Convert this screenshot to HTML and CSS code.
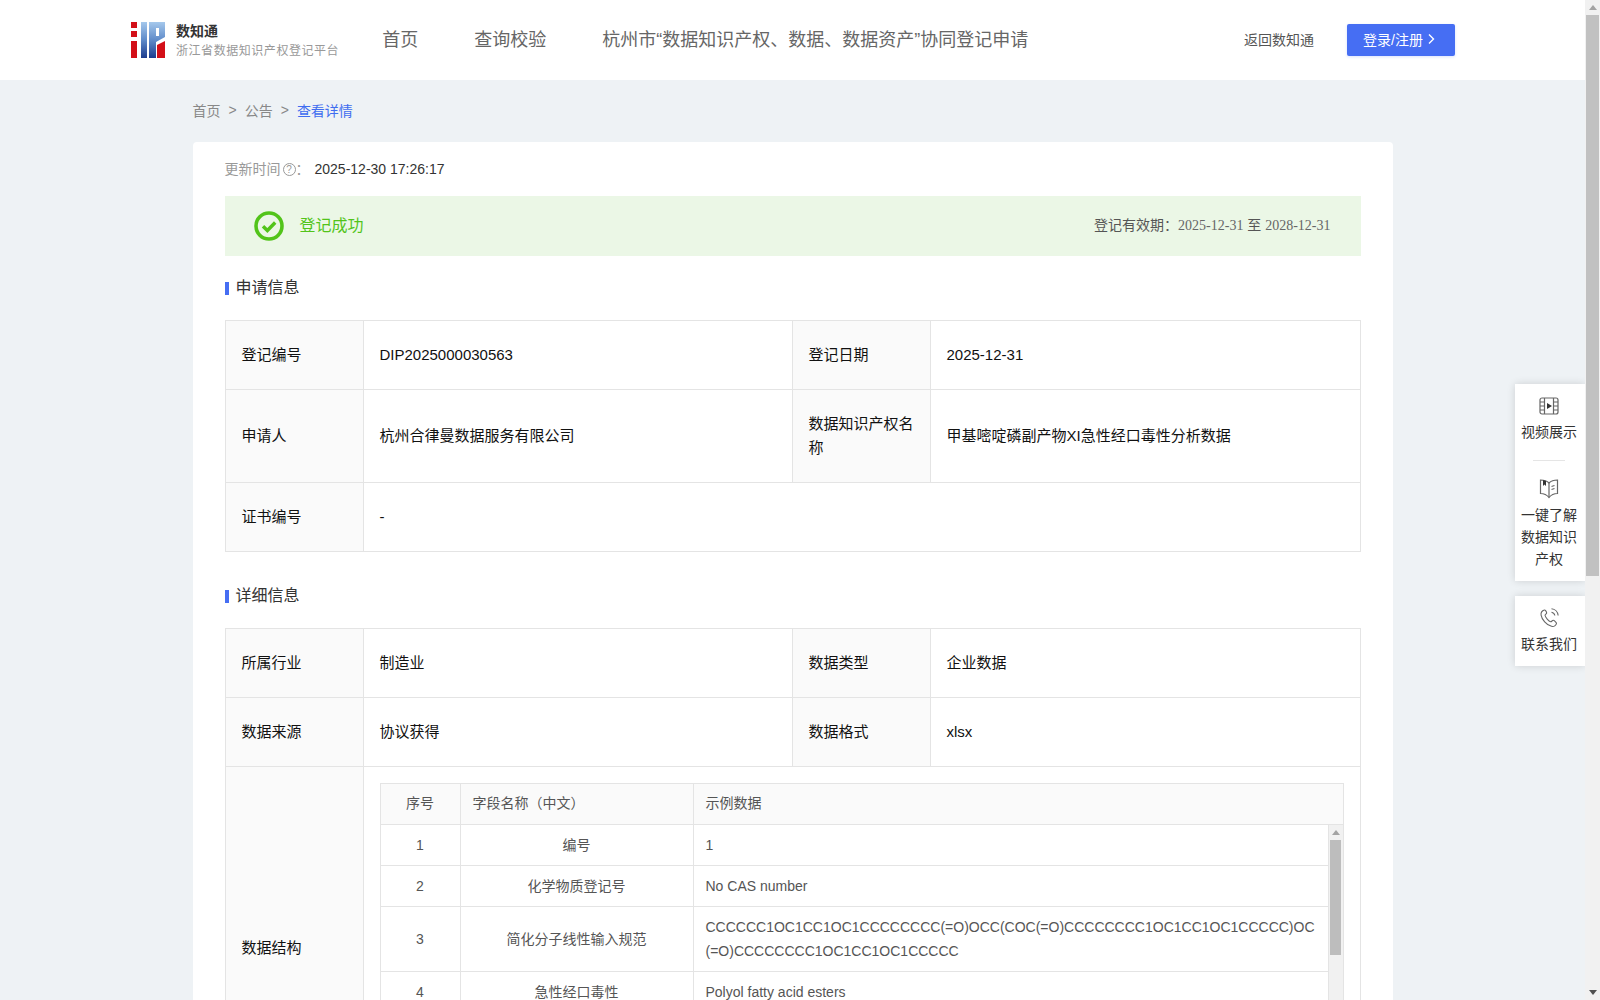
FILE: index.html
```html
<!DOCTYPE html>
<html lang="zh-CN">
  <head>
    <meta charset="UTF-8" />
    <title>数知通</title>
    <link rel="stylesheet" href="styles.css">
  </head>
  <body>
    <div class="page">
      <header class="header">
        <div class="logo">
          <svg class="logo-mark" width="34" height="36" viewBox="0 0 34 36">
            <defs>
              <linearGradient id="logo-blue" x1="0" y1="0" x2="0" y2="1">
                <stop offset="0" stop-color="#a5c8ec" />
                <stop offset="0.5" stop-color="#5f8bc9" />
                <stop offset="1" stop-color="#1c3c8e" />
              </linearGradient>
            </defs>
            <path d="M0 0h6v6H0zM0 9h6v6H0zM0 19h6v17H0z" fill="#d30f18" />
            <path d="M10 0h6v36h-6z" fill="url(#logo-blue)" />
            <path d="M18 0h16v15l-9 5v16h-7zM25 6v8h3V6z" fill="url(#logo-blue)" fill-rule="evenodd" />
            <path d="M26 36V23l8-4v17z" fill="#d30f18" />
          </svg>
          <div class="logo-text">
            <strong>数知通</strong>
            <span>浙江省数据知识产权登记平台</span>
          </div>
        </div>
        <nav class="nav">
          <a>首页</a>
          <a>查询校验</a>
          <a>杭州市“数据知识产权、数据、数据资产”协同登记申请</a>
        </nav>
        <div class="header-right">
          <a class="back-link">返回数知通</a>
          <button class="login-btn">登录/注册
            <svg width="8" height="12" viewBox="0 0 8 12"><path d="M2 1.5 6.5 6 2 10.5" fill="none" stroke="#fff" stroke-width="1.4" /></svg>
          </button>
        </div>
      </header>

      <main class="main">
        <div class="breadcrumb">
          <span>首页</span><i>&gt;</i><span>公告</span><i>&gt;</i><span class="current">查看详情</span>
        </div>

        <section class="card">
          <div class="update-row">
            <span class="update-label">更新时间</span>
            <span class="help">?</span>
            <span class="update-label">：</span>
            <span class="update-time">2025-12-30 17:26:17</span>
          </div>

          <div class="status">
            <svg width="30" height="30" viewBox="0 0 30 30">
              <circle cx="15" cy="15" r="13" fill="none" stroke="#52c41a" stroke-width="3.6" />
              <path d="M9 15.2l4.4 4.3L21.2 11.5" fill="none" stroke="#52c41a" stroke-width="3.4" />
            </svg>
            <span class="status-text">登记成功</span>
            <span class="status-date">登记有效期：<em>2025-12-31</em> 至 <em>2028-12-31</em></span>
          </div>

          <h3 class="section-title">申请信息</h3>
          <table class="info-table">
            <colgroup><col class="col-label" /><col class="col-value" /><col class="col-label" /><col /></colgroup>
            <tr>
              <th>登记编号</th>
              <td>DIP2025000030563</td>
              <th>登记日期</th>
              <td>2025-12-31</td>
            </tr>
            <tr class="tall">
              <th>申请人</th>
              <td>杭州合律曼数据服务有限公司</td>
              <th>数据知识产权名称</th>
              <td>甲基嘧啶磷副产物XI急性经口毒性分析数据</td>
            </tr>
            <tr>
              <th>证书编号</th>
              <td colspan="3">-</td>
            </tr>
          </table>

          <h3 class="section-title second">详细信息</h3>
          <table class="info-table">
            <colgroup><col class="col-label" /><col class="col-value" /><col class="col-label" /><col /></colgroup>
            <tr>
              <th>所属行业</th>
              <td>制造业</td>
              <th>数据类型</th>
              <td>企业数据</td>
            </tr>
            <tr>
              <th>数据来源</th>
              <td>协议获得</td>
              <th>数据格式</th>
              <td>xlsx</td>
            </tr>
            <tr>
              <th>数据结构</th>
              <td colspan="3" class="structure-cell">
                <table class="field-table field-head">
                  <colgroup><col class="col-no" /><col class="col-name" /><col /></colgroup>
                  <tr>
                    <th class="center">序号</th>
                    <th>字段名称（中文）</th>
                    <th>示例数据</th>
                  </tr>
                </table>
                <div class="field-body">
                  <table class="field-table">
                    <colgroup><col class="col-no" /><col class="col-name" /><col /></colgroup>
                    <tr>
                      <td class="center">1</td>
                      <td class="center">编号</td>
                      <td>1</td>
                    </tr>
                    <tr>
                      <td class="center">2</td>
                      <td class="center">化学物质登记号</td>
                      <td>No CAS number</td>
                    </tr>
                    <tr>
                      <td class="center">3</td>
                      <td class="center">简化分子线性输入规范</td>
                      <td class="smiles">CCCCCC1OC1CC1OC1CCCCCCCC(=O)OCC(COC(=O)CCCCCCCC1OC1CC1OC1CCCCC)OC(=O)CCCCCCCC1OC1CC1OC1CCCCC</td>
                    </tr>
                    <tr>
                      <td class="center">4</td>
                      <td class="center">急性经口毒性</td>
                      <td>Polyol fatty acid esters</td>
                    </tr>
                  </table>
                  <div class="inner-scrollbar">
                    <span class="arrow-up"></span>
                    <span class="inner-thumb"></span>
                  </div>
                </div>
              </td>
            </tr>
          </table>
        </section>
      </main>

      <aside class="side-tools">
        <div class="side-box">
          <a class="side-item">
            <svg width="20" height="18" viewBox="0 0 20 18" fill="none" stroke="#666" stroke-width="1.2">
              <rect x="1" y="1" width="18" height="16" rx="2" />
              <path d="M5.5 1v16M14.5 1v16M1 5h4.500M1 9h4.500M1 13h4.500M14.500 5H19M14.500 9H19M14.500 13H19" />
              <path d="M8 6l5 3-5 3z" fill="#333" stroke="none" />
            </svg>
            <span>视频展示</span>
          </a>
          <div class="side-line"></div>
          <a class="side-item second">
            <svg width="20" height="21" viewBox="0 0 20 21" fill="none" stroke="#666" stroke-width="1.2">
              <path d="M10 5C8 3 5 2 1.500 2v13.500c3.500 0 6.500 1.500 8.500 4 2-2.500 5-4 8.500-4V2C15 2 12 3 10 5z" />
              <path d="M10 5v14.500M12.500 8.500l3-1M12.500 11.500l3-1" />
              <path d="M4 2v6l1.500-1.500L7 8V3z" fill="#333" stroke="none" />
            </svg>
            <span>一键了解数据知识产权</span>
          </a>
        </div>
        <div class="side-box contact">
          <a class="side-item">
            <svg width="20" height="20" viewBox="0 0 24 24" fill="none" stroke="#666" stroke-width="1.3">
              <path d="M15 5a5 5 0 0 1 4 4M15 1a9 9 0 0 1 8 8" />
              <path d="M6.500 2.500c-2.500.8-4.500 2.600-4 6 .8 5 6.500 12 12.500 13.500 3 .7 5.500-1 6-3.500.2-1-2.800-3.800-4-3.800-1 0-2 2-3 1.800-2.300-.5-6.500-5.500-6.800-7.800-.1-1 2-1.800 2-2.800 0-1.200-2-4-2.700-3.400z" />
            </svg>
            <span>联系我们</span>
          </a>
        </div>
      </aside>
    </div>

    <div class="page-scrollbar">
      <span class="arrow-up"></span>
      <span class="page-thumb"></span>
      <span class="arrow-down"></span>
    </div>
  </body>
</html>
```

FILE: styles.css
```css
* {
  box-sizing: border-box;
  margin: 0;
  padding: 0;
}
html,
body {
  height: 100%;
  overflow: hidden;
}
body {
  display: flex;
  background: #eef2f5;
  color: #333;
  font-family: "Liberation Sans", "Noto Sans CJK SC", sans-serif;
  font-size: 14px;
}
.page {
  position: relative;
  flex: 1;
  min-width: 0;
  overflow: hidden;
}

/* Header */
.header {
  display: flex;
  align-items: center;
  height: 80px;
  padding: 0 130px 0 131px;
  background: #fff;
}
.logo {
  display: flex;
  align-items: center;
}
.logo-text {
  display: flex;
  flex-direction: column;
  margin-left: 11px;
  padding-top: 2px;
}
.logo-text strong {
  font-size: 14px;
  line-height: 18px;
  color: #333;
}
.logo-text span {
  margin-top: 2px;
  font-size: 12px;
  line-height: 18px;
  letter-spacing: 0.55px;
  color: #999;
}
.nav {
  display: flex;
  gap: 56px;
  margin-left: 43px;
  padding-bottom: 4px;
  font-size: 18px;
  color: #666;
}
.header-right {
  display: flex;
  align-items: center;
  gap: 33px;
  margin-left: auto;
}
.back-link {
  padding-bottom: 2px;
  color: #555;
}
.login-btn {
  display: flex;
  align-items: center;
  justify-content: center;
  gap: 4px;
  width: 108px;
  height: 32px;
  padding: 0 4px 3px 0;
  border: none;
  border-radius: 2px;
  background: #466ef3;
  box-shadow: 0 1px 3px rgba(70, 110, 243, 0.2);
  color: #fff;
  font-family: inherit;
  font-size: 14px;
}

/* Content */
.main {
  width: 1200px;
  margin: 0 auto;
}
.breadcrumb {
  display: flex;
  align-items: center;
  height: 62px;
  padding-bottom: 2px;
  color: #888;
}
.breadcrumb i {
  margin: 0 8px;
  font-style: normal;
}
.breadcrumb .current {
  color: #3f6df0;
}
.card {
  padding: 0 32px 32px;
  border-radius: 4px;
  background: #fff;
}
.update-row {
  display: flex;
  align-items: center;
  height: 54px;
}
.update-label {
  padding-bottom: 2px;
  color: #999;
}
.help {
  width: 13px;
  height: 13px;
  margin-left: 2px;
  border: 1px solid #999;
  border-radius: 50%;
  color: #999;
  font-size: 10px;
  line-height: 11px;
  text-align: center;
}
.update-time {
  margin-left: 5px;
}
.status {
  display: flex;
  align-items: center;
  height: 60px;
  padding: 0 30px 0 29px;
  background: #ebf7e6;
}
.status-text {
  margin-left: 16px;
  padding-bottom: 4px;
  color: #52c41a;
  font-size: 16px;
}
.status-date {
  margin-left: auto;
  padding-bottom: 4px;
  color: #555;
}
.status-date em {
  color: #666;
  font-family: "Liberation Serif", serif;
  font-size: 14px;
  font-style: normal;
}
.section-title {
  display: flex;
  align-items: center;
  margin: 22px 0 22px;
  color: #333;
  font-size: 16px;
  font-weight: normal;
  line-height: 20px;
}
.section-title::before {
  content: "";
  width: 4px;
  height: 13px;
  margin-right: 7px;
  background: #466ef3;
}
.section-title.second {
  margin-top: 34px;
}

/* Info tables */
.info-table {
  width: 100%;
  table-layout: fixed;
  border-collapse: collapse;
  font-size: 15px;
  line-height: 24px;
  color: #111;
}
.info-table .col-label {
  width: 138px;
}
.info-table .col-value {
  width: 429px;
}
.info-table > tbody > tr > th,
.info-table > tbody > tr > td {
  height: 69px;
  padding: 0 16px;
  border: 1px solid #e4e4e4;
  text-align: left;
  vertical-align: middle;
}
.info-table > tbody > tr > th {
  background: #fafafa;
  font-weight: normal;
}
.info-table > tbody > tr.tall > th,
.info-table > tbody > tr.tall > td {
  height: 93px;
}
.info-table > tbody > tr > td.structure-cell {
  padding: 16px;
  height: 362px;
}

/* Field table inside the data structure row */
.field-table {
  width: 100%;
  table-layout: fixed;
  border-collapse: collapse;
  font-size: 14px;
  line-height: 23px;
  color: #555;
}
.field-table .col-no {
  width: 80px;
}
.field-table .col-name {
  width: 233px;
}
.field-table th,
.field-table td {
  padding: 8.5px 12px;
  border: 1px solid #e4e4e4;
  text-align: left;
  font-weight: normal;
}
.field-head th {
  padding: 7.5px 12px 9.5px;
  background: #fafafa;
}
.field-table .center {
  text-align: center;
}
.field-table td.smiles {
  padding: 7.5px 11px 8.5px 12px;
  line-height: 24px;
  word-break: break-all;
}
.field-body {
  display: flex;
  align-items: flex-start;
  height: 288px;
}
.field-body .field-table {
  flex: 1;
  min-width: 0;
  border-top: none;
}
.field-body .field-table tr:first-child td {
  border-top: none;
}
.inner-scrollbar {
  display: flex;
  flex-direction: column;
  align-items: center;
  flex: none;
  width: 15px;
  height: 288px;
  border-right: 1px solid #e4e4e4;
  background: #f1f1f1;
}
.inner-thumb {
  width: 11px;
  height: 115px;
  margin-top: 5px;
  background: #bdbdbd;
}

/* Floating tools */
.side-tools {
  position: absolute;
  top: 384px;
  right: 0;
  display: flex;
  flex-direction: column;
  gap: 15px;
  width: 70px;
}
.side-box {
  padding: 13px 8px 11px 6px;
  background: #fff;
  box-shadow: 0 0 8px rgba(0, 0, 0, 0.14);
}
.side-box.contact {
  padding-top: 12px;
  padding-bottom: 11px;
}
.side-item {
  display: flex;
  flex-direction: column;
  align-items: center;
  color: #333;
  line-height: 22px;
  text-align: center;
}
.side-item span {
  margin-top: 6px;
}
.side-item.second span,
.contact .side-item span {
  margin-top: 5px;
}
.side-line {
  width: 32px;
  height: 1px;
  margin: 17px auto 17px;
  background: #e5e5e5;
}

/* Window scrollbar */
.page-scrollbar {
  position: relative;
  display: flex;
  flex-direction: column;
  align-items: center;
  flex: none;
  width: 15px;
  background: #f1f1f1;
}
.arrow-up {
  flex: none;
  width: 0;
  height: 0;
  margin-top: 5px;
  border: 4px solid transparent;
  border-top: none;
  border-bottom: 5px solid #a3a3a3;
}
.page-thumb {
  width: 13px;
  height: 561px;
  margin-top: 5px;
  background: #c1c1c1;
}
.arrow-down {
  position: absolute;
  right: 3px;
  bottom: 5px;
  width: 0;
  height: 0;
  border: 4px solid transparent;
  border-bottom: none;
  border-top: 5px solid #505050;
}
```
